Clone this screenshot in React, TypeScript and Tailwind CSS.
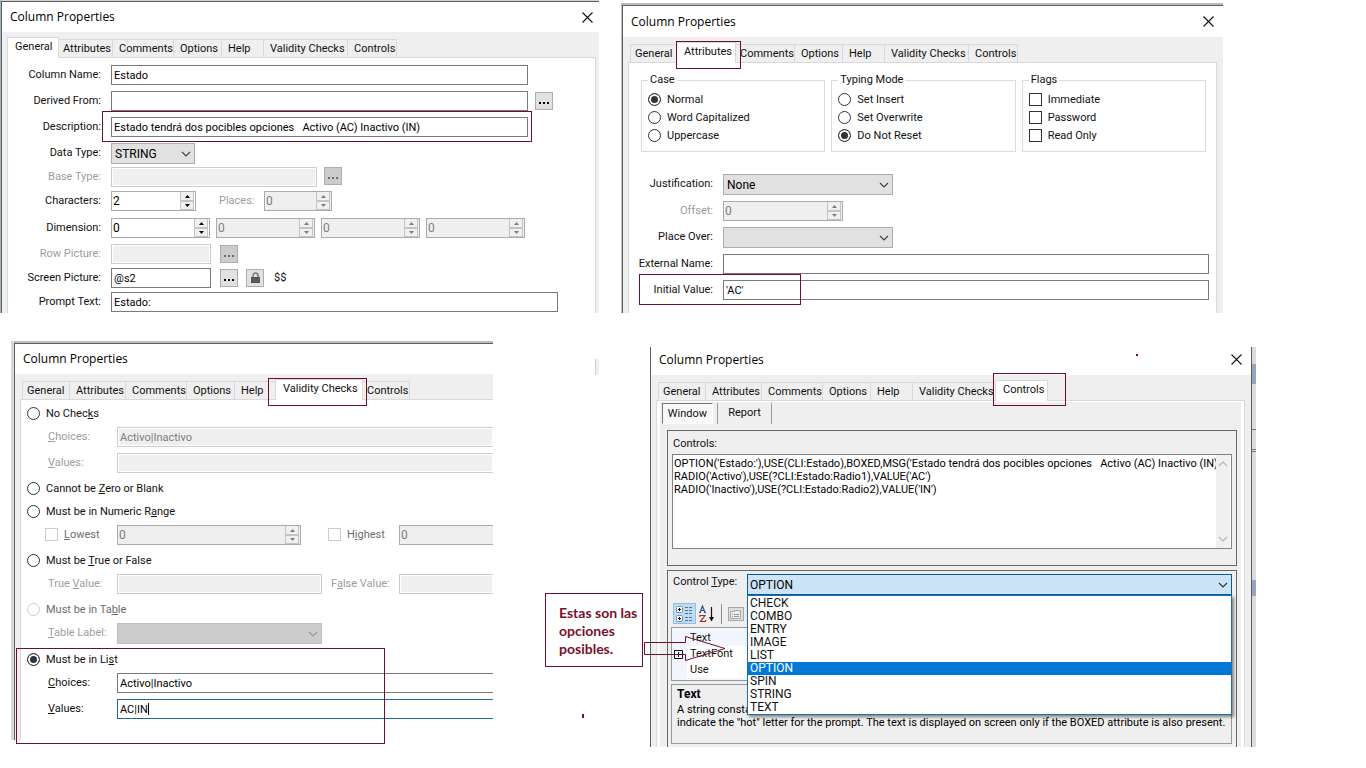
import React, { useId } from 'react';
import clsx from 'clsx';

const tabs = [
  { label: 'General', width: 'w-12' },
  { label: 'Attributes', width: 'w-14' },
  { label: 'Comments', width: 'w-[61px]' },
  { label: 'Options', width: 'w-12' },
  { label: 'Help', width: 'w-[42px]' },
  { label: 'Validity Checks', width: 'w-[84px]' },
  { label: 'Controls', width: 'w-[49px]' },
];

const controlTypes = ['CHECK', 'COMBO', 'ENTRY', 'IMAGE', 'LIST', 'OPTION', 'SPIN', 'STRING', 'TEXT'];

/* Red annotation rectangle, laid over whatever it is placed in */
function Mark({ className }: { className: string }) {
  return <span className={clsx('pointer-events-none absolute z-20 border border-[#6b0f2a]', className)}></span>;
}

function Chevron({ className }: { className?: string }) {
  return (
    <svg width="10" height="6" viewBox="0 0 10 6" className={clsx('pointer-events-none', className)}>
      <path d="M1 1l4 4 4-4" fill="none" stroke="currentColor" strokeWidth="1.2" />
    </svg>
  );
}

function CloseButton() {
  return (
    <button aria-label="Close" className="flex h-full w-6 items-center justify-center">
      <svg width="11" height="11" viewBox="0 0 11 11">
        <path d="M.5 .5l10 10M10.5 .5l-10 10" stroke="#111" strokeWidth="1.1" />
      </svg>
    </button>
  );
}

function TitleBar({ closable = true, className }: { closable?: boolean; className?: string }) {
  return (
    <header className={clsx('flex items-center justify-between bg-white pl-2', className)}>
      <h2 className="font-['Open_Sans','Noto_Sans',sans-serif] text-[12px] leading-4 text-black">Column Properties</h2>
      {closable && <CloseButton />}
    </header>
  );
}

function TabBar({ active, mark }: { active: string; mark?: string }) {
  return (
    <nav role="tablist" className="flex h-[25px] items-end pl-[2px]">
      {tabs.map(({ label, width }) => {
        const selected = label === active;
        return (
          <div key={label} className={clsx('group relative shrink-0', width, selected && 'z-10')}>
            <button
              role="tab"
              aria-selected={selected}
              className={clsx(
                'block border-[#d9d9d9] text-left whitespace-nowrap',
                selected
                  ? '-mx-[2px] -mb-px h-[21px] w-[calc(100%+4px)] border border-b-0 bg-white pb-[2px] pl-[7px]'
                  : 'h-[18px] w-full border-t border-r pt-px pl-[6px] group-first:border-l group-first:pl-1',
              )}
            >
              {label}
            </button>
            {selected && mark && <Mark className={mark} />}
          </div>
        );
      })}
    </nav>
  );
}

type TextFieldProps = React.InputHTMLAttributes<HTMLInputElement> & { focused?: boolean };

function TextField({ className, disabled, focused, ...rest }: TextFieldProps) {
  return (
    <input
      type="text"
      disabled={disabled}
      className={clsx(
        'h-5 min-w-0 border px-[2px] outline-none',
        disabled
          ? 'border-[#cccccc] bg-[#efefef] text-[#7d7d7d] shadow-[inset_0_0_0_1px_#fff]'
          : 'bg-white text-black',
        !disabled && (focused ? 'border-[#1f6a9c]' : 'border-[#7a7a7a]'),
        className,
      )}
      {...rest}
    />
  );
}

function Spinner({ id, label, value, disabled, className, open }: {
  id?: string; label?: string; value: string; disabled?: boolean; className: string; open?: boolean;
}) {
  return (
    <span
      className={clsx(
        'flex h-5 border border-[#ababab]',
        disabled ? 'bg-[#efefef] text-[#7d7d7d]' : 'bg-white text-black',
        open && 'border-r-0',
        className,
      )}
    >
      <input
        id={id}
        aria-label={label}
        inputMode="numeric"
        defaultValue={value}
        disabled={disabled}
        className="min-w-0 flex-1 pl-px text-[12px] outline-none"
      />
      {!open && (
        <span className="flex w-[15px] flex-col pr-px">
          <button aria-label="Increase" disabled={disabled} className="flex h-[9px] items-center justify-center border border-t-0 border-[#c4c4c4] bg-[#f0f0f0]">
            <svg width="5" height="3" viewBox="0 0 5 3"><path d="M0 3L2.500 0 5 3z" fill="currentColor" /></svg>
          </button>
          <button aria-label="Decrease" disabled={disabled} className="flex h-[9px] items-center justify-center border border-[#c4c4c4] bg-[#f0f0f0]">
            <svg width="5" height="3" viewBox="0 0 5 3"><path d="M0 0L2.500 3 5 0z" fill="currentColor" /></svg>
          </button>
        </span>
      )}
    </span>
  );
}

function Dropdown({ id, value, disabled, className }: { id: string; value: string; disabled?: boolean; className: string }) {
  return (
    <span className={clsx('relative block', className)}>
      <select
        id={id}
        disabled={disabled}
        defaultValue={value}
        className={clsx(
          'h-[21px] w-full appearance-none border pl-[3px] text-[12px] outline-none',
          disabled ? 'border-[#bfbfbf] bg-[#cccccc]' : 'border-[#adadad] bg-[#e1e1e1] text-black',
        )}
      >
        <option>{value}</option>
      </select>
      <Chevron className={clsx('absolute top-2 right-[4px]', disabled ? 'text-[#999]' : 'text-[#444]')} />
    </span>
  );
}

function MoreButton({ label, disabled, className }: { label: string; disabled?: boolean; className?: string }) {
  return (
    <button
      aria-label={label}
      disabled={disabled}
      className={clsx(
        'flex size-[18px] shrink-0 items-center justify-center border border-[#adadad]',
        disabled ? 'bg-[#cccccc] text-[#6d6d6d]' : 'bg-[#e1e1e1] text-black',
        className,
      )}
    >
      <svg width="10" height="2" viewBox="0 0 10 2" className="mt-[3px]">
        <path d="M0 0h2v2H0zM4 0h2v2H4zM8 0h2v2H8z" fill="currentColor" />
      </svg>
    </button>
  );
}

/* Right-aligned caption followed by its controls */
function Row({ label, htmlFor, disabled, className, children }: {
  label: string; htmlFor: string; disabled?: boolean; className?: string; children: React.ReactNode;
}) {
  return (
    <div className={clsx('flex h-5 gap-[10px]', className)}>
      <label htmlFor={htmlFor} className={clsx('w-[var(--label)] shrink-0 pt-[2px] text-right leading-4 whitespace-nowrap', disabled && 'text-[#9d9d9d]')}>
        {label}
      </label>
      {children}
    </div>
  );
}

function Choice({ type = 'radio', name, checked, disabled, className, children }: {
  type?: 'radio' | 'checkbox'; name?: string; checked?: boolean; disabled?: boolean; className?: string; children: React.ReactNode;
}) {
  return (
    <label className={clsx('flex h-[18px] items-center gap-[6px]', disabled && 'text-[#6d6d6d]', className)}>
      <input
        type={type}
        name={name}
        defaultChecked={checked}
        disabled={disabled}
        className={clsx(
          'size-[13px] shrink-0 appearance-none border bg-white',
          disabled ? 'border-[#cccccc]' : 'border-[#333]',
          type === 'radio' && 'rounded-full checked:bg-[#333] checked:shadow-[inset_0_0_0_2px_#fff]',
        )}
      />
      <span className="pt-px whitespace-nowrap">{children}</span>
    </label>
  );
}

function Group({ title, children }: { title: string; children: React.ReactNode }) {
  return (
    <fieldset className="h-20 flex-1 border border-[#dcdcdc] px-[6px]">
      <legend className="px-[2px] leading-4">{title}</legend>
      <div className="pt-[2px]">{children}</div>
    </fieldset>
  );
}

function GeneralDialog() {
  const id = useId();
  return (
    <section className="flex min-w-0">
      <div className="w-px bg-[#9fb3c0]"></div>
      <div className="min-w-0 flex-1 border-t border-[#d0d4d8]">
        <div className="h-full border-t border-l border-[#5f5f5f] bg-[#efefef]">
          <TitleBar className="h-[30px]" />
          <div className="pr-[3px] pl-[5px]">
            <TabBar active="General" />
            <div className="border border-b-0 border-[#d9d9d9] bg-white pt-[7px] pb-px [--label:93px]">
              <Row label="Column Name:" htmlFor={`${id}name`}>
                <TextField id={`${id}name`} defaultValue="Estado" className="mr-[67px] flex-1" />
              </Row>
              <Row label="Derived From:" htmlFor={`${id}from`} className="mt-[6px]">
                <TextField id={`${id}from`} className="flex-1" />
                <MoreButton label="Choose source" className="mt-px mr-[42px] -ml-[3px]" />
              </Row>
              <Row label="Description:" htmlFor={`${id}desc`} className="mt-[6px]">
                <span className="relative mr-[67px] flex flex-1">
                  <TextField id={`${id}desc`} defaultValue="Estado tendrá dos pocibles opciones   Activo (AC) Inactivo (IN)" className="flex-1" />
                  <Mark className="-top-[6px] -right-1 -bottom-[5px] -left-[9px]" />
                </span>
              </Row>
              <Row label="Data Type:" htmlFor={`${id}type`} className="mt-[6px]">
                <Dropdown id={`${id}type`} value="STRING" className="w-[84px]" />
              </Row>
              <Row label="Base Type:" htmlFor={`${id}base`} disabled className="mt-1">
                <TextField id={`${id}base`} disabled className="w-[206px]" />
                <MoreButton label="Choose base type" disabled className="-ml-[3px]" />
              </Row>
              <Row label="Characters:" htmlFor={`${id}chars`} className="mt-1">
                <Spinner id={`${id}chars`} value="2" className="w-[85px]" />
                <label htmlFor={`${id}places`} className="ml-[13px] w-[35px] pt-[2px] leading-4 text-[#9d9d9d]">Places:</label>
                <Spinner id={`${id}places`} value="0" disabled className="w-[68px]" />
              </Row>
              <Row label="Dimension:" htmlFor={`${id}dim`} className="mt-[7px]">
                <span className="flex gap-[6px]">
                  <Spinner id={`${id}dim`} value="0" className="w-[99px]" />
                  <Spinner label="Dimension 2" value="0" disabled className="w-[99px]" />
                  <Spinner label="Dimension 3" value="0" disabled className="w-[99px]" />
                  <Spinner label="Dimension 4" value="0" disabled className="w-[99px]" />
                </span>
              </Row>
              <Row label="Row Picture:" htmlFor={`${id}row`} disabled className="mt-[6px]">
                <TextField id={`${id}row`} disabled className="w-[100px]" />
                <MoreButton label="Choose row picture" disabled className="mt-px -ml-px" />
              </Row>
              <Row label="Screen Picture:" htmlFor={`${id}screen`} className="mt-1">
                <TextField id={`${id}screen`} defaultValue="@s2" className="w-[100px]" />
                <MoreButton label="Choose screen picture" className="mt-px -ml-px" />
                <button aria-label="Lock picture" className="mt-px -ml-[2px] flex size-[18px] items-center justify-center border border-[#adadad] bg-[#e1e1e1]">
                  <svg width="11" height="12" viewBox="0 0 11 12">
                    <path d="M3 6V3.500a2.500 2.500 0 0 1 5 0V6" fill="none" stroke="#777" strokeWidth="1.500" />
                    <path d="M1 5h9v6H1z" fill="#505050" />
                    <path d="M1 7h9M1 9h9" stroke="#777" strokeWidth=".6" />
                  </svg>
                </button>
                <span className="pt-[2px] leading-4">$$</span>
              </Row>
              <Row label="Prompt Text:" htmlFor={`${id}prompt`} className="mt-1">
                <TextField id={`${id}prompt`} defaultValue="Estado:" className="mr-[37px] flex-1" />
              </Row>
            </div>
          </div>
        </div>
      </div>
    </section>
  );
}

function AttributesDialog() {
  const id = useId();
  return (
    <section className="mt-[3px] flex min-w-0">
      <div className="w-px bg-[#b4c0ca]"></div>
      <div className="min-w-0 flex-1 border-t-2 border-[#bcbcbc]">
        <div className="h-full border-t border-l border-[#5f5f5f] bg-[#efefef]">
          <TitleBar className="h-[31px] pr-[3px]" />
          <div className="pr-[6px] pl-[5px]">
            <TabBar active="Attributes" mark="-top-px -right-[7px] -bottom-[7px] -left-[2px]" />
            <div className="border border-b-0 border-[#d9d9d9] bg-white pt-[9px] pb-[13px] [--label:84px]">
              <div className="mr-[10px] ml-3 flex gap-[6px]">
                <Group title="Case">
                  <Choice name={`${id}case`} checked>Normal</Choice>
                  <Choice name={`${id}case`}>Word Capitalized</Choice>
                  <Choice name={`${id}case`}>Uppercase</Choice>
                </Group>
                <Group title="Typing Mode">
                  <Choice name={`${id}mode`}>Set Insert</Choice>
                  <Choice name={`${id}mode`}>Set Overwrite</Choice>
                  <Choice name={`${id}mode`} checked>Do Not Reset</Choice>
                </Group>
                <Group title="Flags">
                  <Choice type="checkbox">Immediate</Choice>
                  <Choice type="checkbox">Password</Choice>
                  <Choice type="checkbox">Read Only</Choice>
                </Group>
              </div>
              <Row label="Justification:" htmlFor={`${id}just`} className="mt-[22px]">
                <Dropdown id={`${id}just`} value="None" className="w-[170px]" />
              </Row>
              <Row label="Offset:" htmlFor={`${id}offset`} disabled className="mt-[7px]">
                <Spinner id={`${id}offset`} value="0" disabled className="w-[120px]" />
              </Row>
              <Row label="Place Over:" htmlFor={`${id}over`} className="mt-[6px]">
                <Dropdown id={`${id}over`} value="" className="w-[170px]" />
              </Row>
              <Row label="External Name:" htmlFor={`${id}ext`} className="mt-[7px]">
                <TextField id={`${id}ext`} className="mr-[7px] flex-1" />
              </Row>
              <Row label="Initial Value:" htmlFor={`${id}init`} className="relative mt-[6px]">
                <TextField id={`${id}init`} defaultValue="'AC'" className="mr-[7px] flex-1" />
                <Mark className="-top-[6px] -bottom-[5px] left-[10px] w-[162px]" />
              </Row>
            </div>
          </div>
        </div>
      </div>
    </section>
  );
}

/* Caption column of the validity page is left-aligned, with the access key underlined */
function Caption({ htmlFor, disabled, className, children }: {
  htmlFor: string; disabled?: boolean; className?: string; children: React.ReactNode;
}) {
  return (
    <label htmlFor={htmlFor} className={clsx('shrink-0 pt-[2px] leading-4 whitespace-nowrap', disabled && 'text-[#9d9d9d]', className)}>
      {children}
    </label>
  );
}

function ValidityDialog() {
  const id = useId();
  const check = `${id}check`;
  return (
    <section className="relative flex min-w-0">
      <div className="w-[3px] bg-[#d5d9df]"></div>
      <div className="min-w-0 flex-1 border-t-2 border-[#bcbcbc]">
        <div className="border-t border-l border-[#5f5f5f] bg-[#efefef]">
          <TitleBar closable={false} className="h-[30px]" />
          <div className="pl-[5px]">
            <TabBar active="Validity Checks" mark="-top-px -right-[6px] -bottom-[7px] -left-[9px]" />
            <div className="border-t border-l border-[#d9d9d9] bg-white pt-1 pb-[21px]">
              <Choice name={check} className="ml-[6px]">No Chec<u>k</u>s</Choice>
              <div className="mt-[5px] flex pl-[27px]">
                <Caption htmlFor={`${id}c1`} disabled className="w-[69px]"><u>C</u>hoices:</Caption>
                <TextField id={`${id}c1`} disabled defaultValue="Activo|Inactivo" className="flex-1 border-r-0" />
              </div>
              <div className="mt-[6px] flex pl-[27px]">
                <Caption htmlFor={`${id}v1`} disabled className="w-[69px]"><u>V</u>alues:</Caption>
                <TextField id={`${id}v1`} disabled className="flex-1 border-r-0" />
              </div>
              <Choice name={check} className="mt-[6px] ml-[6px]">Cannot be <u>Z</u>ero or Blank</Choice>
              <Choice name={check} className="mt-[5px] ml-[6px]">Must be in Numeric R<u>a</u>nge</Choice>
              <div className="mt-[5px] flex pl-6">
                <Choice type="checkbox" disabled className="w-[72px] shrink-0"><u>L</u>owest</Choice>
                <Spinner label="Lowest value" value="0" disabled className="w-[184px] shrink-0" />
                <Choice type="checkbox" disabled className="ml-[27px] w-[71px] shrink-0">H<u>i</u>ghest</Choice>
                <Spinner label="Highest value" value="0" disabled open className="min-w-0 flex-1" />
              </div>
              <Choice name={check} className="mt-[6px] ml-[6px]">Must be <u>T</u>rue or False</Choice>
              <div className="mt-[5px] flex pl-[27px]">
                <Caption htmlFor={`${id}tv`} disabled className="w-[69px]">True <u>V</u>alue:</Caption>
                <TextField id={`${id}tv`} disabled className="w-[205px] shrink-0" />
                <Caption htmlFor={`${id}fv`} disabled className="ml-[9px] w-[68px]">F<u>a</u>lse Value:</Caption>
                <TextField id={`${id}fv`} disabled className="flex-1 border-r-0" />
              </div>
              <Choice name={check} disabled className="mt-[6px] ml-[6px]">Must be in Ta<u>b</u>le</Choice>
              <div className="mt-[5px] flex h-5 pl-[27px]">
                <Caption htmlFor={`${id}tl`} disabled className="w-[69px]"><u>T</u>able Label:</Caption>
                <Dropdown id={`${id}tl`} value="" disabled className="w-[205px]" />
              </div>
              <Choice name={check} checked className="mt-[7px] ml-[6px]">Must be in Li<u>s</u>t</Choice>
              <div className="mt-[5px] flex pl-[27px]">
                <Caption htmlFor={`${id}c2`} className="w-[69px]"><u>C</u>hoices:</Caption>
                <TextField id={`${id}c2`} defaultValue="Activo|Inactivo" className="flex-1 border-r-0" />
              </div>
              <div className="relative mt-[6px] flex pl-[27px]">
                <Caption htmlFor={`${id}v2`} className="w-[69px]"><u>V</u>alues:</Caption>
                <TextField id={`${id}v2`} focused defaultValue="AC|IN" className="flex-1 border-r-0" />
                {/* Text caret */}
                <span className="absolute top-[4px] left-[127px] h-3 w-px bg-black"></span>
              </div>
            </div>
          </div>
        </div>
      </div>
      <Mark className="-bottom-1 left-[5px] h-24 w-[369px]" />
    </section>
  );
}

function Callout() {
  return (
    <aside className="relative mt-[252px] ml-[52px] h-[74px] w-[98px] border border-[#6b0f2a] bg-white pt-[10px] pl-[13px]">
      <p className="w-20 font-['Lato','Open_Sans',sans-serif] text-[14px] leading-[18px] font-bold text-[#7a0f2b]">
        Estas son las opciones posibles.
      </p>
      <svg width="84" height="28" viewBox="0 0 84 28" className="absolute top-[41px] left-[98px] z-30">
        <path d="M.5 7.500H41.500V1.500L81 13.500 41.500 25.500V19.500H.5z" fill="none" stroke="#6b0f2a" />
      </svg>
    </aside>
  );
}

function GridToolbar() {
  return (
    <div className="flex h-[21px] items-center">
      <button aria-label="Categorized" className="flex h-[21px] w-[23px] items-center justify-center border border-[#8fc1ea] bg-[#bcdcf4]">
        <svg width="17" height="17" viewBox="0 0 17 17">
          <rect x=".5" y="1.500" width="6" height="6" rx="1" fill="#fff" stroke="#7c8fa8" />
          <rect x=".5" y="10.500" width="6" height="6" rx="1" fill="#fff" stroke="#7c8fa8" />
          <path d="M2 4.500h3M3.500 3v3M2 13.500h3M3.500 12v3" stroke="#111" />
          <path d="M9 2.500h3M13 2.500h3M9 5.500h3M13 5.500h3M9 8.500h3M13 8.500h3M9 12.500h3M13 12.500h3M9 15.500h3M13 15.500h3" stroke="#5a7290" />
        </svg>
      </button>
      <button aria-label="Alphabetical" className="ml-[3px]">
        <svg width="17" height="18" viewBox="0 0 17 18">
          <path d="M1 7.500L3.500 1 6 7.500M2 5.500h3M0 7.500h2M5 7.500h2" fill="none" stroke="#2c4f9e" strokeWidth="1.200" />
          <path d="M1 10.500h5L1.500 16.500H6.500M1 10v2M6.500 15v2" fill="none" stroke="#9c2b2b" strokeWidth="1.200" />
          <path d="M12.500 2v11" stroke="#111" strokeWidth="1.200" />
          <path d="M10 12h5l-2.500 4.500z" fill="#111" />
        </svg>
      </button>
      <span className="ml-[5px] h-5 w-px bg-[#8f8f8f]"></span>
      <button aria-label="Property pages" disabled className="ml-[6px]">
        <svg width="16" height="16" viewBox="0 0 16 16">
          <rect x=".5" y="1.500" width="15" height="13" fill="#dedede" stroke="#a8a8a8" />
          <path d="M2.500 12.500v-7h4v-1h6v8z" fill="#ececec" stroke="#a8a8a8" />
          <path d="M4 8.500h1M6 8.500h5M4 10.500h1M6 10.500h5" stroke="#999" />
        </svg>
      </button>
    </div>
  );
}

function ControlsDialog() {
  const id = useId();
  return (
    <section className="mt-[6px] flex min-w-0">
      <div className="min-w-0 flex-1 border-r border-l border-[#5f5f5f] bg-[#efefef]">
        <TitleBar className="h-7 pr-[3px] pb-[3px]" />
        <div className="pr-[6px] pl-[5px]">
          <TabBar active="Controls" mark="-top-[7px] -bottom-[6px] -left-1 w-[73px]" />
          <div className="border border-b-0 border-[#d9d9d9]">
            <div className="border-x-3 border-t border-white pt-px pr-[4px] pl-[1px]">
              <div className="flex h-[21px] pl-px" role="tablist">
                <button role="tab" aria-selected="true" className="h-[21px] w-[51px] border border-t-[#777] border-r-white border-b-white border-l-[#777] bg-[#f8f8f8]">
                  Window
                </button>
                <button role="tab" aria-selected="false" className="ml-1 w-[55px] border-x border-[#999] pb-px">Report</button>
              </div>

              <div className="mt-[6px] ml-[6px] border border-[#666] px-[4px] pt-1 pb-4">
                <label htmlFor={`${id}src`} className="block h-[19px] pt-px pl-px leading-4">Controls:</label>
                <div className="flex border border-[#828282] bg-white">
                  <textarea
                    id={`${id}src`}
                    wrap="off"
                    className="h-[93px] min-w-0 flex-1 resize-none overflow-hidden pt-[2px] pl-px leading-[13px] text-black outline-none"
                    defaultValue={
                      "OPTION('Estado:'),USE(CLI:Estado),BOXED,MSG('Estado tendrá dos pocibles opciones   Activo (AC) Inactivo (IN)\nRADIO('Activo'),USE(?CLI:Estado:Radio1),VALUE('AC')\nRADIO('Inactivo'),USE(?CLI:Estado:Radio2),VALUE('IN')"
                    }
                  />
                  <span className="flex w-[15px] shrink-0 flex-col items-center justify-between border-r border-white bg-[#f0f0f0] py-[6px] text-[#b5b5b5]">
                    <Chevron className="rotate-180" />
                    <Chevron />
                  </span>
                </div>
              </div>

              <div className="relative mt-1 ml-[6px] border border-b-0 border-[#666] pt-[3px] pr-[4px] pb-[3px] pl-[3px]">
                <div className="flex h-[21px]">
                  <label htmlFor={`${id}ct`} className="w-[76px] shrink-0 pl-[2px] leading-4 whitespace-nowrap">Control <u>T</u>ype:</label>
                  <div className="relative z-10 flex-1">
                    <select id={`${id}ct`} defaultValue="OPTION" className="h-[21px] w-full appearance-none border border-[#0a5aa0] bg-[#cce4f7] pl-[2px] text-[12px] text-black outline-none">
                      {controlTypes.map((type) => (
                        <option key={type}>{type}</option>
                      ))}
                    </select>
                    <Chevron className="absolute top-2 right-[4px] text-[#333]" />
                    <ul role="listbox" aria-label="Control types" className="absolute top-[21px] right-0 left-0 border border-[#1f6f9f] bg-white pt-px text-[12px] leading-[13px] shadow-[2px_2px_3px_rgba(0,0,0,0.45)]">
                      {controlTypes.map((type) => (
                        <li key={type} role="option" aria-selected={type === 'OPTION'} className="pl-[2px] aria-selected:bg-[#0078d7] aria-selected:text-white">
                          {type}
                        </li>
                      ))}
                    </ul>
                  </div>
                </div>
                <div className="mt-2 pl-[2px]">
                  <GridToolbar />
                </div>
                {/* Property grid */}
                <ul className="mt-[3px] h-[54px] border border-[#999] bg-[#f2f5fb] pt-[2px] leading-4">
                  <li className="pl-[18px]">Text</li>
                  <li className="flex items-center">
                    <svg width="9" height="9" viewBox="0 0 9 9" className="mx-[2px]">
                      <path d="M.5 .5h8v8h-8zM2 4.500h5M4.500 2v5" fill="none" stroke="#111" />
                    </svg>
                    <span className="ml-[2px] flex-1 bg-white pl-[3px]">TextFont</span>
                  </li>
                  <li className="ml-[15px] bg-white pl-[3px]">Use</li>
                </ul>
                <div className="mt-[3px] h-[60px] border border-[#999] pl-[5px] text-black">
                  <h3 className="pt-px text-[12px] leading-4 font-bold">Text</h3>
                  <p className="pt-px leading-[13px] whitespace-nowrap">
                    A string constant containing the prompt for the group of controls. This may contain an ampersand (&amp;) to
                    <br />
                    indicate the "hot" letter for the prompt. The text is displayed on screen only if the BOXED attribute is also present.
                  </p>
                </div>
              </div>
            </div>
          </div>
        </div>
      </div>
      {/* Sliver of the window behind */}
      <div className="flex w-1 flex-col bg-[#dcdcdc]">
        <span className="mt-[17px] h-5 bg-[#93a5c0]"></span>
        <span className="mt-[45px] h-px bg-[#777]"></span>
        <span className="mt-[19px] h-[3px] border-y border-[#777]"></span>
        <span className="mt-[128px] h-4 bg-[#93a5c0]"></span>
      </div>
    </section>
  );
}

export default function App() {
  return (
    <main className="min-h-screen bg-white font-['Roboto','Liberation_Sans',sans-serif] text-[11px] leading-4 text-[#111]">
      <div className="grid grid-cols-[599fr_602fr_121fr] gap-x-[22px]">
        <GeneralDialog />
        <AttributesDialog />
      </div>
      <div className="relative mt-7 grid grid-cols-[482fr_157fr_606fr_110fr] items-start pl-[11px]">
        <ValidityDialog />
        <Callout />
        <ControlsDialog />
        <span className="absolute top-[18px] left-[595px] h-4 w-1 border-l border-[#d0d0d0] bg-[#efefef]"></span>
        <span className="absolute top-[13px] left-[1136px] size-[2px] bg-[#7a0f2b]"></span>
        <span className="absolute top-[373px] left-[582px] h-1 w-[2px] bg-[#7a0f2b]"></span>
      </div>
    </main>
  );
}
